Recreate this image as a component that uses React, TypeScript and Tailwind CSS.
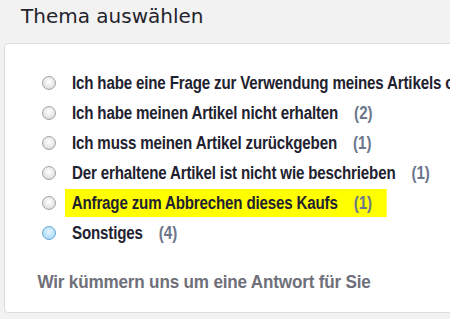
import React from 'react';

const topics = [
  { label: 'Ich habe eine Frage zur Verwendung meines Artikels oder möchte etwas wissen', count: null },
  { label: 'Ich habe meinen Artikel nicht erhalten', count: 2 },
  { label: 'Ich muss meinen Artikel zurückgeben', count: 1 },
  { label: 'Der erhaltene Artikel ist nicht wie beschrieben', count: 1 },
  { label: 'Anfrage zum Abbrechen dieses Kaufs', count: 1, highlight: true },
  { label: 'Sonstiges', count: 4, selected: true },
];

const Radio: React.FC<{ selected?: boolean }> = ({ selected }) => (
  <span
    className={
      selected
        ? 'block h-[14px] w-[14px] shrink-0 rounded-full border border-[#6aa9d6] bg-[radial-gradient(circle_at_50%_40%,#e6f5ff_0%,#b9e0fb_60%,#8fc8ef_100%)]'
        : 'block h-[14px] w-[14px] shrink-0 rounded-full border border-[#a3a3a3] bg-[radial-gradient(circle_at_50%_40%,#ffffff_0%,#e8e8e8_55%,#c9c9c9_100%)]'
    }
  />
);

const App: React.FC = () => {
  return (
    <div className="h-[319px] w-[450px] overflow-hidden bg-[#f2f2f2]">
      {/* Header */}
      <h1 className="pl-[21px] pt-[1px] font-['DejaVu_Sans',sans-serif] text-[20px] leading-[30px] text-[#24242c]">
        Thema auswählen
      </h1>

      {/* Card */}
      <div className="ml-[4px] mt-[12px] h-[270px] w-[460px] rounded-[4px] border border-[#dcdcdc] bg-white font-['Liberation_Sans',sans-serif] font-bold">
        <ul className="flex flex-col pt-[24px]">
          {topics.map((t) => (
            <li key={t.label} className="flex h-[30px] items-center whitespace-nowrap pl-[37px]">
              <Radio selected={t.selected} />
              <div
                className={
                  t.highlight
                    ? 'ml-[9px] flex h-[28px] origin-left scale-x-[0.84] items-center bg-[#ffff00] pl-[8px] pr-[17px]'
                    : 'ml-[16px] flex origin-left scale-x-[0.84] items-center'
                }
              >
                <span className="text-[18px] tracking-[-0.2px] text-[#1f2230]">{t.label}</span>
                {t.count !== null && (
                  <span className="ml-[19px] text-[18px] text-[#6c778c]">({t.count})</span>
                )}
              </div>
            </li>
          ))}
        </ul>
        <p className="origin-left scale-x-[0.9] pl-[36px] pt-[20px] text-[19px] tracking-[-0.2px] text-[#6f7079]">
          Wir kümmern uns um eine Antwort für Sie
        </p>
      </div>
    </div>
  );
};

export default App;
